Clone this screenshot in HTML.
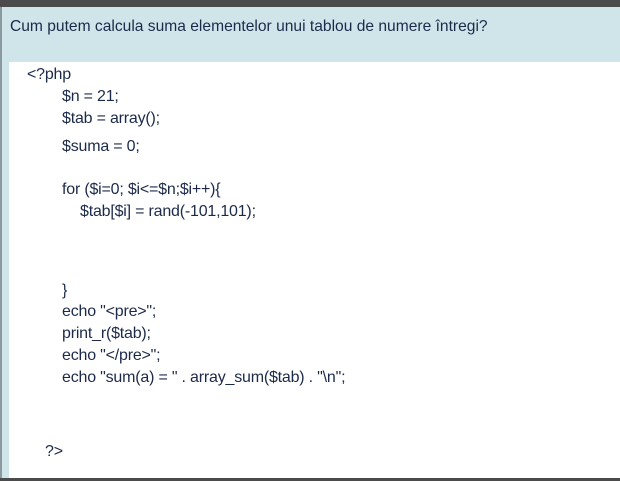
<!DOCTYPE html><html><head><style>
body{margin:0;width:620px;height:481px;overflow:hidden;background:#cfe5ea;position:relative;font-family:"Liberation Sans",sans-serif;}
#top{position:absolute;left:0;top:0;width:620px;height:7px;background:#4b4b4b}
#bot{position:absolute;left:0;top:478px;width:620px;height:3px;background:#4b4b4b}
#lb{position:absolute;left:0;top:7px;width:2px;height:471px;background:#8a9a9e}
h1{position:absolute;left:10px;top:18px;margin:0;font-size:15.6px;font-weight:normal;color:#1c2a4a;white-space:nowrap}
#box{position:absolute;left:9px;top:62px;width:611px;height:416px;background:#fff}
.l{position:absolute;font-size:16px;color:#1c2a4a;white-space:pre;line-height:16px;letter-spacing:-0.2px}
</style></head><body>
<div id="top"></div><div id="lb"></div>
<h1>Cum putem calcula suma elementelor unui tablou de numere întregi?</h1>
<div id="box"></div>
<div class="l" style="left:27px;top:67px">&lt;?php</div>
<div class="l" style="left:62px;top:89px">$n = 21;</div>
<div class="l" style="left:62px;top:111px">$tab = array();</div>
<div class="l" style="left:62px;top:139px">$suma = 0;</div>
<div class="l" style="left:62px;top:182px">for ($i=0; $i&lt;=$n;$i++){</div>
<div class="l" style="left:80px;top:204px">$tab[$i] = rand(-101,101);</div>
<div class="l" style="left:62px;top:283px">}</div>
<div class="l" style="left:62px;top:304px">echo "&lt;pre&gt;";</div>
<div class="l" style="left:62px;top:326px">print_r($tab);</div>
<div class="l" style="left:62px;top:348px">echo "&lt;/pre&gt;";</div>
<div class="l" style="left:62px;top:370px">echo "sum(a) = " . array_sum($tab) . "\n";</div>
<div class="l" style="left:45px;top:444px">?&gt;</div>
<div id="bot"></div>
</body></html>
